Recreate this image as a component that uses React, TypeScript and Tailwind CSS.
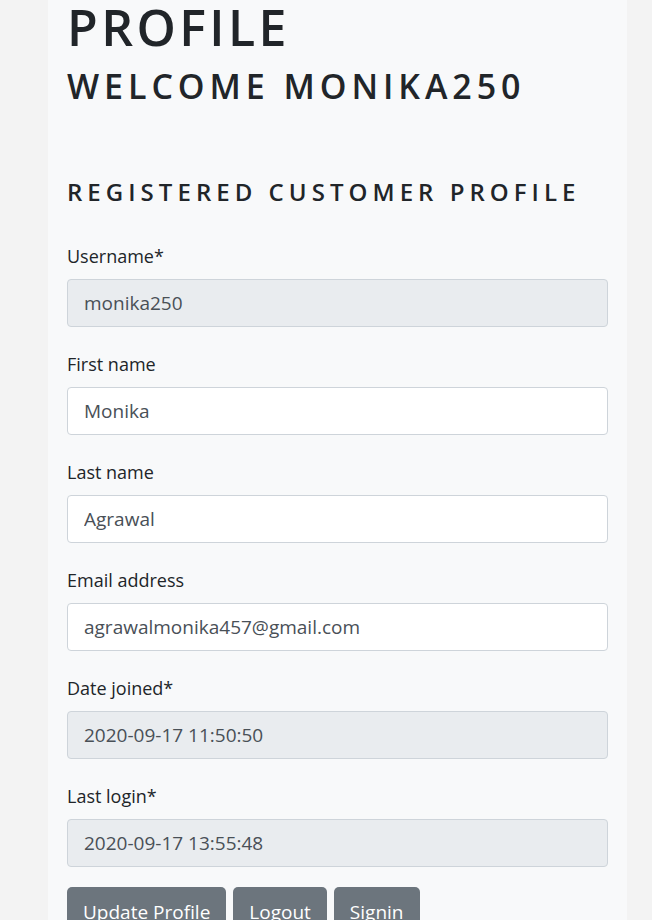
const fields = [
  { label: "Username*", value: "monika250", disabled: true },
  { label: "First name", value: "Monika", disabled: false },
  { label: "Last name", value: "Agrawal", disabled: false },
  { label: "Email address", value: "agrawalmonika457@gmail.com", disabled: false },
  { label: "Date joined*", value: "2020-09-17 11:50:50", disabled: true },
  { label: "Last login*", value: "2020-09-17 13:55:48", disabled: true },
];

export default function App() {
  return (
    <div
      className="min-h-screen bg-[#f3f3f3] pl-[48px] pr-[25px] text-[#212529]"
      style={{ fontFamily: '"Open Sans", "Liberation Sans", sans-serif' }}
    >
      <div className="bg-[#f8f9fa] px-[19px] pb-10 min-h-[920px]">
        <h1 className="text-[50px] leading-[52px] font-semibold tracking-[0.068em] pt-[1px]">PROFILE</h1>
        <h2 className="mt-[13px] text-[34px] leading-[40px] font-semibold tracking-[0.145em]">WELCOME MONIKA250</h2>

        <h3 className="mt-[71px] text-[24px] leading-[30px] font-semibold tracking-[0.21em]">REGISTERED CUSTOMER PROFILE</h3>

        <form className="mt-[36px]">
          {fields.map((f) => (
            <div key={f.label} className="mb-[24px]">
              <label className="block text-[18px] leading-[27px] mb-[9px]">{f.label}</label>
              <input
                readOnly
                disabled={f.disabled}
                value={f.value}
                className={
                  "block w-full h-[48px] px-[16px] text-[19px] text-[#495057] border border-[#ced4da] rounded-[4px] outline-none " +
                  (f.disabled ? "bg-[#e9ecef]" : "bg-white")
                }
              />
            </div>
          ))}
          <div className="flex gap-[7px] -mt-[4px]">
            <button type="button" className="h-[50px] px-[16px] text-[19px] text-white bg-[#6c757d] rounded-[5px]">Update Profile</button>
            <button type="button" className="h-[50px] px-[16px] text-[19px] text-white bg-[#6c757d] rounded-[5px]">Logout</button>
            <button type="button" className="h-[50px] px-[16px] text-[19px] text-white bg-[#6c757d] rounded-[5px]">Signin</button>
          </div>
        </form>
      </div>
    </div>
  );
}
